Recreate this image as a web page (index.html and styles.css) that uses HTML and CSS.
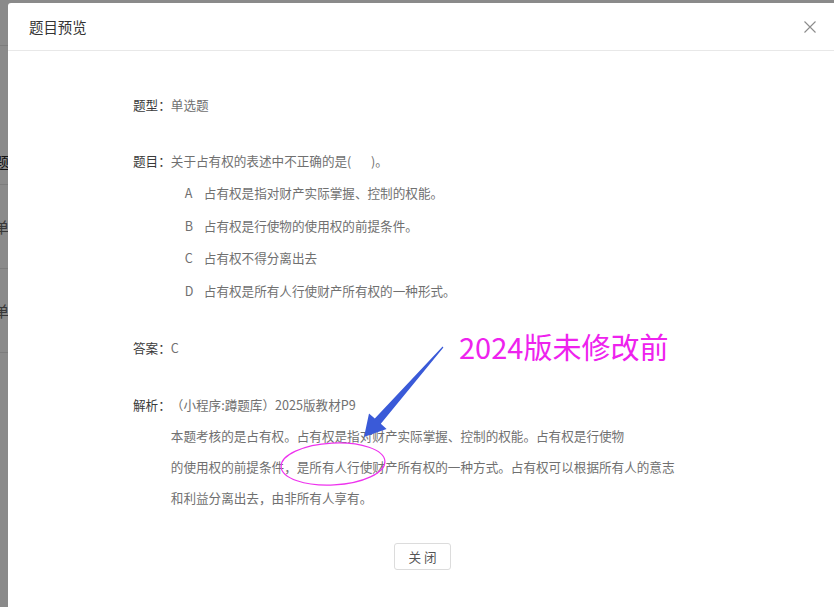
FILE: index.html
```html
<!DOCTYPE html>
<html lang="zh-CN">
<head>
  <meta charset="UTF-8">
  <meta name="viewport" content="width=device-width, initial-scale=1.0">
  <title>题目预览</title>
  <link rel="stylesheet" href="styles.css">
</head>
<body>
  <!-- 背景页面（被遮罩盖住） -->
  <div class="page">
    <div class="page-top"></div>
    <div class="page-row page-head"><span>题</span></div>
    <div class="page-row"><span>单</span></div>
    <div class="page-row"><span>单</span></div>
  </div>

  <div class="mask"></div>

  <div class="modal">
    <div class="modal-header">
      <span class="modal-title">题目预览</span>
      <svg class="modal-close" width="12" height="12" viewBox="0 0 12 12">
        <path d="M0.5 0.5 L11.5 11.5 M11.5 0.5 L0.5 11.5" stroke="#8c8c8c" stroke-width="1.1" fill="none"/>
      </svg>
    </div>

    <div class="modal-body">
      <div class="item item-type">
        <span class="label">题型：</span>
        <div class="value">单选题</div>
      </div>

      <div class="item item-question">
        <span class="label">题目：</span>
        <div class="value">
          <div>关于占有权的表述中不正确的是(&nbsp;&nbsp;&nbsp;&nbsp;&nbsp;&nbsp;&nbsp;)。</div>
          <ul class="options">
            <li><span class="opt-key">A</span>占有权是指对财产实际掌握、控制的权能。</li>
            <li><span class="opt-key">B</span>占有权是行使物的使用权的前提条件。</li>
            <li><span class="opt-key">C</span>占有权不得分离出去</li>
            <li><span class="opt-key">D</span>占有权是所有人行使财产所有权的一种形式。</li>
          </ul>
        </div>
      </div>

      <div class="item item-answer">
        <span class="label">答案：</span>
        <div class="value">C</div>
      </div>

      <div class="item item-analysis">
        <span class="label">解析：</span>
        <div class="value">
          <div>（小程序:蹲题库）2025版教材P9</div>
          <div class="analysis">
            <p>本题考核的是占有权。占有权是指对财产实际掌握、控制的权能。占有权是行使物</p>
            <p>的使用权的前提条件，是所有人行使财产所有权的一种方式。占有权可以根据所有人的意志</p>
            <p>和利益分离出去，由非所有人享有。</p>
          </div>
        </div>
      </div>

      <div class="modal-footer">
        <button class="btn">关 闭</button>
      </div>
    </div>
  </div>

  <!-- 截图上的标注 -->
  <div class="note">2024版未修改前</div>
  <svg class="marks" width="834" height="607" viewBox="0 0 834 607">
    <polygon fill="#3a5ad8" points="443.4,347.4 380.8,423.8 386.6,429 364,437 369,413.4 374.8,418.6 442.6,346.6"/>
    <ellipse cx="333" cy="464" rx="52" ry="21" fill="none" stroke="#ee33ee" stroke-width="1.2" transform="rotate(-3 333 464)"/>
  </svg>
</body>
</html>
```

FILE: styles.css
```css
html, body {
  margin: 0;
  padding: 0;
  height: 100%;
  overflow: hidden;
}

body {
  font-family: "Noto Sans CJK SC", "Noto Sans", sans-serif;
  background: #fff;
  position: relative;
}

/* 背景页面 */
.page {
  height: 100%;
  overflow: hidden;
}
.page-top {
  height: 45px;
  border-bottom: 1px solid #e6e6e6;
}
.page-row {
  height: 83px;
  border-bottom: 1px solid #e6e6e6;
  display: flex;
  align-items: center;
  font-size: 15px;
  color: #666;
}
.page-head {
  height: 139px;
  align-items: flex-start;
  padding-top: 105px;
  box-sizing: border-box;
  color: #222;
}
.page-row span {
  margin-left: -6px;
}

.mask {
  position: fixed;
  inset: 0;
  background: rgba(0, 0, 0, 0.46);
}

/* 弹窗 */
.modal {
  position: absolute;
  left: 8px;
  top: 3px;
  width: 829px;
  height: 604px;
  background: #fff;
  border-radius: 3px 3px 0 0;
}

.modal-header {
  height: 47px;
  border-bottom: 1px solid #e8e8e8;
  padding: 0 21px;
  display: flex;
  align-items: center;
  justify-content: space-between;
}
.modal-title {
  font-size: 14.4px;
  color: #333;
}
.modal-close {
  margin-top: 1px;
}

.modal-body {
  padding: 44px 0 0 125px;
  font-size: 12.6px;
  color: #707070;
}

.item {
  display: flex;
  line-height: 20px;
}
.label {
  color: #3a3a3a;
  flex: none;
}
.item-question { margin-top: 36px; }
.item-answer { margin-top: 30px; }
.item-analysis { margin-top: 37px; }

.options {
  list-style: none;
  margin: 6px 0 0;
  padding: 0 0 0 14px;
}
.options li {
  line-height: 32.7px;
}
.opt-key {
  display: inline-block;
  width: 19px;
}

.analysis {
  margin-top: 5.5px;
}
.analysis p {
  margin: 0;
  line-height: 31px;
  white-space: nowrap;
}

.modal-footer {
  margin: 29.7px 0 0 -125px;
  display: flex;
  justify-content: center;
}
.btn {
  width: 57px;
  height: 27px;
  padding: 0;
  background: #fff;
  border: 1px solid #dcdcdc;
  border-radius: 3px;
  font-family: inherit;
  font-size: 12.6px;
  color: #555;
}

/* 标注 */
.note {
  position: absolute;
  left: 459px;
  top: 326px;
  font-size: 29px;
  line-height: 40px;
  color: #ee22ee;
}
.marks {
  position: absolute;
  left: 0;
  top: 0;
  pointer-events: none;
}
```
